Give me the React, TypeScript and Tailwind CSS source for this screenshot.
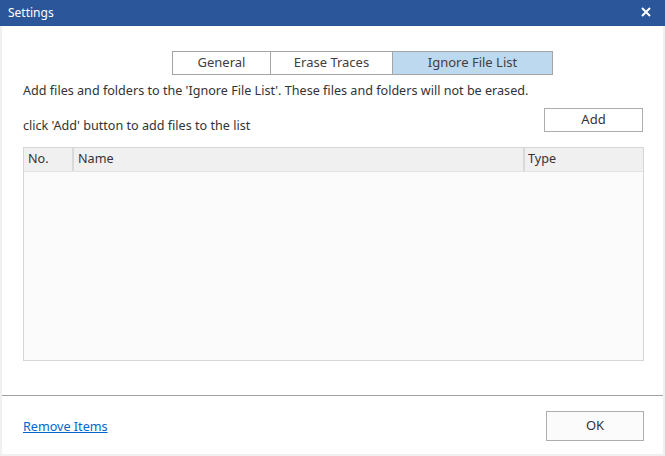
export default function App() {
  return (
    <div className="w-[665px] h-[456px] flex flex-col bg-[#f0f0f0] text-[#333333] font-['Noto_Sans',sans-serif] text-[12.6px] overflow-hidden">
      <div className="h-[26px] shrink-0 bg-[#2b579a] flex items-center justify-between pl-[8px] pr-[14px] text-white">
        <span className="text-[12px]">Settings</span>
        <svg width="10" height="10" viewBox="0 0 10 10" className="mt-[-2px]">
          <path d="M1 1 L9 9 M9 1 L1 9" stroke="white" strokeWidth="2" />
        </svg>
      </div>
      <div className="flex-1 mx-[2px] mb-[2px] bg-white flex flex-col">
        <div className="flex flex-col pl-[21px] pr-[19px] pt-[25px] h-[369px]">
          <div className="flex self-start ml-[149px] h-[24px] text-[13px]">
            <div className="w-[99px] border border-[#a5a5a5] flex items-center justify-center text-[#404040]">General</div>
            <div className="w-[122px] border border-l-0 border-[#a5a5a5] flex items-center justify-center text-[#404040]">Erase Traces</div>
            <div className="w-[160px] border border-l-0 border-[#a5a5a5] bg-[#bdd9f0] flex items-center justify-center text-[#404040]">Ignore File List</div>
          </div>
          <div className="mt-[7px] leading-[18px]">Add files and folders to the 'Ignore File List'. These files and folders will not be erased.</div>
          <div className="flex items-end justify-between mt-[8px]">
            <span className="leading-[18px] mb-[-3px]">click 'Add' button to add files to the list</span>
            <button className="w-[99px] h-[24px] border border-[#adadad] bg-white text-[#333333] text-[13px] mr-[1px]">Add</button>
          </div>
          <div className="mt-[15px] h-[214px] border border-[#d6d6d6] bg-[#fbfbfb] flex flex-col">
            <div className="h-[24px] bg-[#f0f0f0] border-b border-[#e3e3e3] flex items-stretch">
              <div className="w-[50px] flex items-center pl-[4px] border-r-2 border-[#d9d9d9]">No.</div>
              <div className="w-[451px] flex items-center pl-[4px] border-r-2 border-[#d9d9d9]">Name</div>
              <div className="flex-1 flex items-center pl-[3px]">Type</div>
            </div>
          </div>
        </div>
        <div className="h-px bg-[#a0a0a0]" />
        <div className="flex-1 flex items-center justify-between pl-[21px] pr-[19px]">
          <a href="#" className="text-[#0066cc] underline mt-[4px]">Remove Items</a>
          <button className="w-[98px] h-[30px] border border-[#adadad] bg-[#fbfbfb] text-[#333333] text-[13px] mt-[2px]">OK</button>
        </div>
      </div>
    </div>
  );
}
